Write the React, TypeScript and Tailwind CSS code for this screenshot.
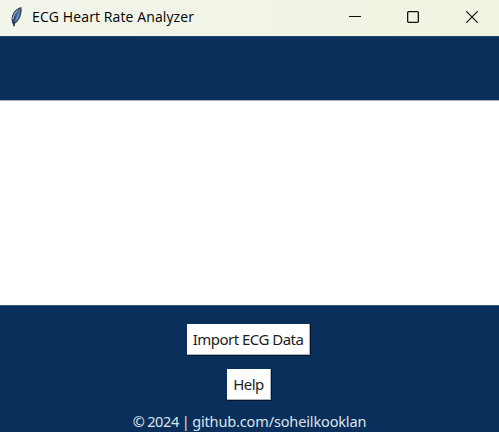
import type { ReactNode } from "react";

function FeatherIcon() {
  return (
    <svg width="16" height="22" viewBox="0 0 16 22" className="block">
      <path d="M13.4 1C9.5 1.8 5.4 5.2 4.1 9.8C3.3 12.6 3.4 15.6 4.8 18.2L5.7 20.6L6.9 20.2L6.7 18C10.2 15.6 12.4 12 13.1 8.3C13.7 5.4 13.9 3.2 13.4 1Z" fill="#34465f" />
      <path d="M12.3 2.5C9.3 4.5 7.4 8 6.8 12.6L6.7 16.4C9.7 14.2 11.3 11 11.9 7.6Z" fill="#6288bd" />
      <path d="M11 5C8.6 8 6.4 12.5 6 20" fill="none" stroke="#24344e" strokeWidth="0.7" />
      <path d="M9.9 4.4C7.1 6.6 5.3 9.6 5 13.4" fill="none" stroke="#a1b8d6" strokeWidth="1.1" />
    </svg>
  );
}

function TitleBar() {
  return (
    <header className="flex h-9 shrink-0 items-center bg-linear-to-r from-[#f2f5ea] to-[#eff4e1] text-black">
      <div className="ml-[8px] mb-[3px] w-4"><FeatherIcon /></div>
      <h1 className="ml-[8px] mb-[2px] flex-1 whitespace-nowrap font-['Open_Sans',sans-serif] text-[14px] leading-5 tracking-[0.11px]">ECG Heart Rate Analyzer</h1>
      <div className="mb-[2px] flex items-center gap-[46px] pr-[21px]">
        <svg width="12" height="12" viewBox="0 0 12 12" stroke="#111" fill="none" className="-ml-px mr-px"><path d="M0 5.5H12" /></svg>
        <svg width="12" height="12" viewBox="0 0 12 12" stroke="#111" strokeWidth="1.3" fill="none" className="-ml-px mr-px"><rect x=".65" y=".65" width="10.7" height="10.7" rx="1" /></svg>
        <svg width="12" height="12" viewBox="0 0 12 12" stroke="#111" strokeWidth="1.2" fill="none"><path d="M.3 .3L11.7 11.7M11.7 .3L.3 11.7" /></svg>
      </div>
    </header>
  );
}

function RaisedButton({ className, children }: { className: string; children: ReactNode }) {
  return (
    <button className={"flex h-8 shrink-0 items-center justify-center whitespace-nowrap border-r border-b border-[#08162a] bg-white pr-px text-[15px] tracking-[-0.52px] text-[#1b1b1b] shadow-[inset_-1px_-1px_0_#aeb3ba] " + className}>
      {children}
    </button>
  );
}

export default function App() {
  return (
    <div className="flex h-[432px] w-[499px] flex-col overflow-hidden bg-[#0a2f5b] font-['Noto_Sans',sans-serif]">
      <TitleBar />
      <div className="h-16 shrink-0 border-t border-[#274a6c]" />
      <main className="h-[205px] shrink-0 border-t border-[#a9adba] bg-white" />
      <footer className="flex flex-1 flex-col items-center border-t border-[#335873]">
        <RaisedButton className="mt-[18px] mr-px w-[124px]">Import ECG Data</RaisedButton>
        <RaisedButton className="mt-[13px] w-[45px]">Help</RaisedButton>
        <p className="mt-[10px] whitespace-nowrap text-[14.5px] leading-5 tracking-[-0.4px] text-[#dce4ec] [word-spacing:-0.5px]">© 2024 | <span className="tracking-[-0.14px]">github.com/soheilkooklan</span></p>
      </footer>
    </div>
  );
}
